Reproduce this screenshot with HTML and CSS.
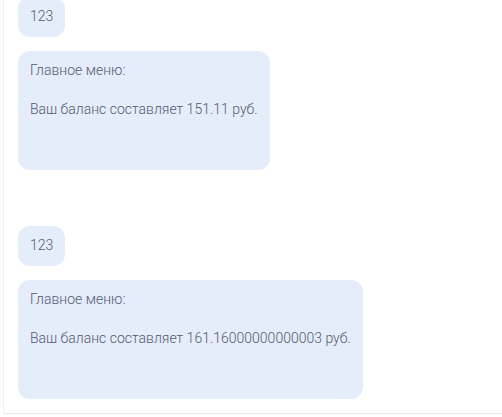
FILE: index.html
```html
<!DOCTYPE html>
<html lang="ru">
<head>
<meta charset="utf-8">
<title>Чат</title>
<link rel="stylesheet" href="styles.css">
</head>
<body>
<div class="frame">
  <div class="chat">
    <div class="pair">
      <div class="bubble">123</div>
      <div class="bubble">Главное меню:

Ваш баланс составляет 151.11 руб.


</div>
    </div>
    <div class="pair">
      <div class="bubble">123</div>
      <div class="bubble">Главное меню:

Ваш баланс составляет 161.16000000000003 руб.


</div>
    </div>
  </div>
</div>
</body>
</html>
```
FILE: styles.css
```css
html, body {
  margin: 0;
  padding: 0;
  background: #ffffff;
}
.frame {
  margin-left: 3px;
  border-left: 1px solid #eef0f8;
  border-bottom: 1px solid #e9e9ec;
  overflow: hidden;
  box-sizing: border-box;
  height: 414px;
}
.chat {
  display: flex;
  flex-direction: column;
  gap: 56px;
  padding-left: 14px;
  margin-top: -3px;
}
.pair {
  display: flex;
  flex-direction: column;
  align-items: flex-start;
  gap: 14px;
}
.bubble {
  background: #e5ecfa;
  border-radius: 12px;
  padding: 10px 12px;
  font-family: Roboto, "Noto Sans", sans-serif;
  font-weight: 300;
  font-size: 14px;
  line-height: 19.8px;
  color: #555b70;
  white-space: pre-wrap;
}
```
